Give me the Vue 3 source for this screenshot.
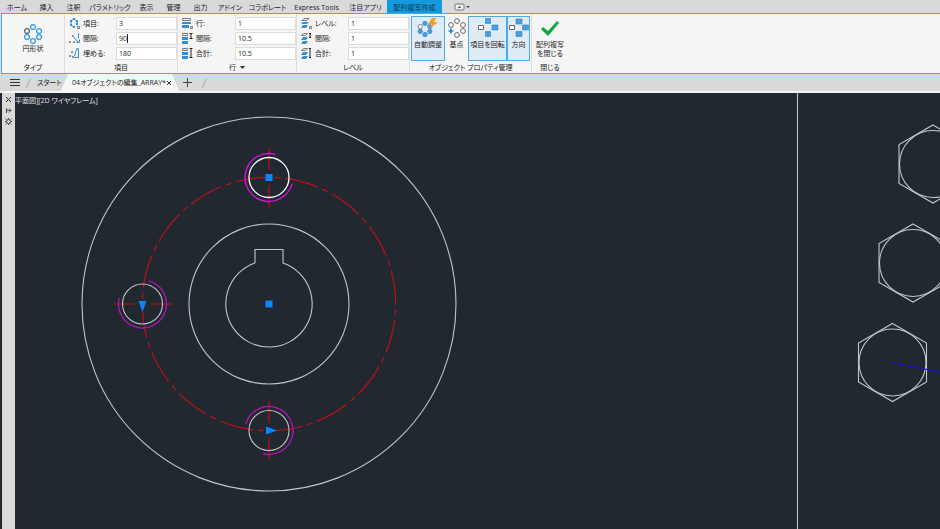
<script setup>
import { ref } from 'vue';

const menuTabs = [
    { name: 'ホーム', size: 'm' },
    { name: '挿入', size: 's' },
    { name: '注釈', size: 's' },
    { name: 'パラメトリック', size: 'xl' },
    { name: '表示', size: 's' },
    { name: '管理', size: 's' },
    { name: '出力', size: 's' },
    { name: 'アドイン', size: 'm' },
    { name: 'コラボレート', size: 'l' },
    { name: 'Express Tools', size: 'xxl' },
    { name: '注目アプリ', size: 'l' },
];

// outline = grey strokes, fill = blue shapes, line = blue strokes, mark = dark strokes
const icons = {
    polar: {
        outline: 'M8.5 8.500h2v2h-2z',
        fill: 'M1 2h2v2h-2zM4 0h2v2h-2zM7 2h2v2h-2zM1 6h2v2h-2zM4 8h2v2h-2zM7 5h2v2h-2z',
        line: 'M2 3l3-2 3 2v3M2 3v4l3 2',
    },
    polarGap: {
        outline: 'M3.500 2.500h1v1h-1zM0.500 8.500h1v1h-1zM4.500 8.500h1v1h-1z',
        line: 'M4.500 4l5 5.500M9.500 0v5M7.500 9.500h3v-3',
    },
    polarFill: {
        outline: 'M0.500 7.500h1v1h-1zM3.500 8.500h1v1h-1zM2.500 3.500h1v1h-1z',
        line: 'M9.500 0.500c-3 1-3 4-4 8M9.500 2v7.500h-4M7 1h3',
    },
    rows: { outline: 'M0.500 0.500h8v2h-8zM8.500 8.500h2v2h-2z', fill: 'M0 4h9v2h-9zM0 7h7v3h-7z' },
    rowGap: { outline: 'M0.500 0.500h5v2h-5z', fill: 'M0 4h6v3h-6zM0 8h6v3h-6z', mark: 'M7.500 0.500h3M7.500 5.500h3M9 1v4' },
    rowTotal: { outline: 'M0.500 0.500h5v2h-5z', fill: 'M0 4h6v3h-6zM0 8h6v3h-6z', mark: 'M7.500 0.500h3M7.500 9.500h3M9 1v9' },
    levels: { outline: 'M3 0.500h5l-2 2h-5zM8.500 8.500h2v2h-2z', fill: 'M2 4h6l-2 2h-6zM2 7h5l-2 3h-5z' },
    levelGap: { outline: 'M2.500 0.500h4l-2 2h-4z', fill: 'M2 4h5l-2 3h-5zM2 8h5l-2 3h-5z', mark: 'M8 0.500h2M8 4.500h2M9 1v3' },
    levelTotal: { outline: 'M2.500 0.500h4l-2 2h-4z', fill: 'M2 4h5l-2 3h-5zM2 8h5l-2 3h-5z', mark: 'M8 0.500h2M8 9.500h2M9 1v9' },
};

const panels = ref([
    {
        id: 'items',
        title: '項目',
        fields: [
            { label: '項目:', value: '3', icon: 'polar' },
            { label: '間隔:', value: '90', icon: 'polarGap', caret: true },
            { label: '埋める:', value: '180', icon: 'polarFill' },
        ],
    },
    {
        id: 'rows',
        title: '行',
        menu: true,
        fields: [
            { label: '行:', value: '1', icon: 'rows' },
            { label: '間隔:', value: '10.5', icon: 'rowGap' },
            { label: '合計:', value: '10.5', icon: 'rowTotal' },
        ],
    },
    {
        id: 'levels',
        title: 'レベル',
        fields: [
            { label: 'レベル:', value: '1', icon: 'levels' },
            { label: '間隔:', value: '1', icon: 'levelGap' },
            { label: '合計:', value: '1', icon: 'levelTotal' },
        ],
    },
]);

const ring = [
    { x: 10, y: 3 },
    { x: 16, y: 7 },
    { x: 16, y: 13 },
    { x: 10, y: 17 },
    { x: 4, y: 13 },
    { x: 4, y: 7 },
];

const holes = [
    { x: 254, y: 84.5, turn: 0, active: true },
    { x: 127.5, y: 211, turn: -90 },
    { x: 254, y: 337.5, turn: -180 },
];

const bolts = [
    { x: 918, y: 71 },
    { x: 898, y: 170 },
    { x: 877.5, y: 269.5 },
];
</script>

<template>
    <div class="app">
        <nav class="menu-bar">
            <button v-for="tab in menuTabs" :key="tab.name" class="menu-tab" :class="tab.size">{{ tab.name }}</button>
            <button class="menu-tab active">配列複写作成</button>
            <button class="menu-view" aria-label="リボン表示">
                <svg width="16" height="8" viewBox="0 0 16 8">
                    <rect x="1" y="1" width="9" height="6" rx="1" fill="#eee" stroke="#777" />
                    <path d="M4 5l1.500-2 1.500 2z" fill="#333" />
                    <path d="M12 3h4l-2 2z" fill="#444" />
                </svg>
            </button>
        </nav>

        <section class="ribbon">
            <div class="panel type">
                <div class="panel-body">
                    <button class="tool">
                        <svg width="20" height="20" viewBox="0 0 20 20" fill="#fff" stroke-width="1.3">
                            <circle v-for="(dot, i) in ring" :key="i" :cx="dot.x" :cy="dot.y" r="2.4" :stroke="i === 5 ? '#666' : '#2f9de4'" />
                        </svg>
                        <span>円形状</span>
                    </button>
                </div>
                <div class="panel-title">タイプ</div>
            </div>

            <div v-for="panel in panels" :key="panel.id" class="panel" :class="panel.id">
                <div class="panel-body fields">
                    <div v-for="(field, i) in panel.fields" :key="i" class="field">
                        <svg width="11" height="11" viewBox="0 0 11 11" fill="none">
                            <path v-if="icons[field.icon].fill" :d="icons[field.icon].fill" fill="#2f8fd8" />
                            <path :d="icons[field.icon].outline" stroke="#777" />
                            <path v-if="icons[field.icon].line" :d="icons[field.icon].line" stroke="#2f8fd8" />
                            <path v-if="icons[field.icon].mark" :d="icons[field.icon].mark" stroke="#222" />
                        </svg>
                        <label :for="panel.id + i">{{ field.label }}</label>
                        <div class="entry">
                            <input :id="panel.id + i" v-model="field.value" type="text" />
                            <i v-if="field.caret" class="caret"></i>
                        </div>
                    </div>
                </div>
                <button v-if="panel.menu" class="panel-title">
                    {{ panel.title }}
                    <svg width="5" height="3" viewBox="0 0 5 3"><path d="M0 0h5l-2.500 3z" fill="#333" /></svg>
                </button>
                <div v-else class="panel-title">{{ panel.title }}</div>
            </div>

            <div class="panel options">
                <div class="panel-body">
                    <button class="tool on auto">
                        <svg width="22" height="20" viewBox="0 0 22 20">
                            <g transform="translate(0 3) scale(.8)">
                                <circle v-for="(dot, i) in ring" :key="i" :cx="dot.x" :cy="dot.y" r="2.7" :fill="i === 5 ? '#fff' : '#4b9fdf'" :stroke="i === 5 ? '#666' : '#3182c4'" />
                            </g>
                            <path d="M15 0l4 0-2 4h4l-9 7 3-5h-4z" fill="#f99c1c" />
                        </svg>
                        <span>自動調整</span>
                    </button>
                    <button class="tool base">
                        <svg width="20" height="20" viewBox="0 0 20 20" fill="#fff" stroke="#666">
                            <template v-for="(dot, i) in ring" :key="i">
                                <circle v-if="i !== 4" :cx="dot.x" :cy="dot.y" r="2.4" />
                            </template>
                            <path d="M4 10.500v5M1.500 13h5" stroke="#1787df" stroke-width="1.6" />
                        </svg>
                        <span>基点</span>
                    </button>
                    <button class="tool on rotate">
                        <svg width="22" height="20" viewBox="0 0 22 20" fill="#4b9fdf" stroke="#3182c4" stroke-width=".6">
                            <path d="M8.500 .5h5v5h-5zM8.500 13.500h5v5h-5zM15 7h6v5h-6z" />
                            <path d="M1.500 7.500h5v4h-5z" fill="#fff" stroke="#666" stroke-width="1" />
                        </svg>
                        <span>項目を回転</span>
                    </button>
                    <button class="tool on direction">
                        <svg width="20" height="20" viewBox="0 0 20 20" fill="#4b9fdf" stroke="#3182c4" stroke-width=".6">
                            <path d="M7 1h6v5h-6zM7 13.500h6v5h-6zM13.500 7h6v5h-6z" />
                            <path d="M0.500 7.500h5v4h-5z" fill="#fff" stroke="#666" stroke-width="1" />
                        </svg>
                        <span>方向</span>
                    </button>
                </div>
                <div class="panel-title">オブジェクト プロパティ管理</div>
            </div>

            <div class="panel close">
                <div class="panel-body">
                    <button class="tool">
                        <svg width="20" height="20" viewBox="0 0 20 20"><path d="M1 11l2-2 5 4 9-10 2 2-11 13z" fill="#10a83c" /></svg>
                        <span>配列複写<br />を閉じる</span>
                    </button>
                </div>
                <div class="panel-title">閉じる</div>
            </div>
        </section>

        <nav class="file-bar">
            <button class="file-menu" aria-label="ファイル メニュー">
                <svg width="10" height="8" viewBox="0 0 10 8"><path d="M0 0.500h10M0 3.500h10M0 6.500h10" stroke="#333" /></svg>
            </button>
            <i class="slash"></i>
            <button class="start">スタート</button>
            <div class="file-tab">
                <button class="file-name">04オブジェクトの編集_ARRAY*</button>
                <button class="file-close" aria-label="閉じる">
                    <svg width="6" height="6" viewBox="0 0 6 6"><path d="M1 1l4 4M5 1l-4 4" stroke="#333" /></svg>
                </button>
            </div>
            <button class="file-add" aria-label="新規図面">
                <svg width="9" height="9" viewBox="0 0 9 9"><path d="M4.500 0v9M0 4.500h9" stroke="#444" /></svg>
            </button>
            <i class="slash"></i>
        </nav>

        <main class="workspace">
            <aside class="palette">
                <button aria-label="パレットを閉じる">
                    <svg width="7" height="7" viewBox="0 0 7 7"><path d="M1 1l5 5M6 1l-5 5" stroke="#333" /></svg>
                </button>
                <button aria-label="自動的に隠す">
                    <svg width="7" height="7" viewBox="0 0 7 7" fill="none" stroke="#555"><path d="M1.500 1v5M2 3.500h4M4 1.500l2 2-2 2" /></svg>
                </button>
                <button aria-label="プロパティ">
                    <svg width="7" height="7" viewBox="0 0 7 7" fill="none" stroke="#444">
                        <circle cx="3.500" cy="3.500" r="2" />
                        <path d="M0.500 0.500l1 1M6.500 0.500l-1 1M0.500 6.500l1-1M6.500 6.500l-1-1M3.500 0v1M3.500 6v1M0 3.500h1M6 3.500h1" />
                    </svg>
                </button>
            </aside>
            <div class="canvas">
                <svg class="drawing" fill="none" stroke="#c3c6c9" stroke-width="1.100">
                    <circle cx="254" cy="211" r="187" />
                    <circle cx="254" cy="211" r="80" />
                    <path d="M240 170V156.500H268V170A43.200 43.200 0 1 1 240 170" />
                    <circle class="pitch" cx="254" cy="211" r="126.700" />

                    <g v-for="hole in holes" :key="hole.turn" :transform="`translate(${hole.x} ${hole.y}) rotate(${hole.turn})`">
                        <path class="center-line" d="M0 -29V-8M0 8V30" />
                        <path class="thread" :class="{ bright: hole.active }" d="M6.200 -23.200A24 24 0 1 0 23.200 6.200" />
                        <circle class="hole" :class="{ bright: hole.active }" r="20" />
                    </g>

                    <g class="grips">
                        <rect x="250.500" y="81" width="7" height="7" />
                        <rect x="250.500" y="207.500" width="7" height="7" />
                        <path d="M123.500 208h8l-4 11z" />
                        <path d="M251 333.500v8l11-4z" />
                    </g>

                    <path d="M782.500 0V2000" />
                    <g v-for="bolt in bolts" :key="bolt.y" :transform="`translate(${bolt.x} ${bolt.y})`">
                        <path d="M0 -39L34 -19.500V19.500L0 39L-34 19.500V-19.500Z" />
                        <circle r="33.500" />
                    </g>
                    <path class="rubber-band" d="M877 269.500L937 281.500" />
                </svg>
                <div class="view-label">平面図][2D ワイヤフレーム]</div>
            </div>
        </main>
    </div>
</template>

<style>
body {
    background: #212830;
}
</style>

<style scoped>
.app {
    display: flex;
    flex-direction: column;
    min-height: 100vh;
    font-family: "Open Sans", "Noto Sans CJK JP", sans-serif;
    font-size: 7px;
    line-height: 9px;
    font-feature-settings: "palt";
    color: #222;
    background: #d9d9d9;
}

button,
input {
    margin: 0;
    padding: 0;
    border: 0;
    background: none;
    font: inherit;
    font-feature-settings: inherit;
    color: inherit;
    white-space: nowrap;
}

svg {
    display: block;
    flex: none;
}

.menu-bar {
    display: flex;
    height: 13px;
    padding-left: 1px;
}

.menu-tab {
    flex: none;
    padding-top: 1px;
}

.menu-tab.s {
    width: 27px;
}

.menu-tab.m {
    width: 32px;
}

.menu-tab.l {
    width: 43px;
}

.menu-tab.xl {
    width: 46px;
}

.menu-tab.xxl,
.menu-tab.active {
    width: 55px;
}

.menu-tab.active {
    background: #1499dc;
    color: #12374f;
}

.menu-view {
    display: flex;
    align-items: center;
    margin-left: 12px;
}

.ribbon {
    display: flex;
    margin-left: 1px;
    border: 1px solid #45abe2;
    border-right: 0;
    background: #f5f5f5;
}

.panel {
    flex: none;
    border-right: 1px solid #dedede;
    display: flex;
    flex-direction: column;
    box-sizing: border-box;
}

.panel.type {
    width: 63px;
}

.panel.items,
.panel.levels {
    width: 113px;
}

.panel.rows {
    width: 119px;
}

.panel.options {
    width: 122px;
}

.panel.close {
    width: 36px;
    border-right: 0;
}

.panel-body {
    display: flex;
    justify-content: center;
    height: 47px;
    box-sizing: border-box;
    padding-top: 2px;
}

.panel-title {
    display: flex;
    justify-content: center;
    align-items: center;
    gap: 4px;
    height: 12px;
    white-space: nowrap;
}

.fields {
    flex-direction: column;
    justify-content: flex-start;
    gap: 2px;
    padding: 3px 0 0 4px;
}

.field {
    display: grid;
    grid-template-columns: 14px 1fr 61px;
    align-items: center;
}

.field label {
    white-space: nowrap;
}

.entry {
    position: relative;
}

.entry input {
    display: block;
    width: 100%;
    height: 13px;
    box-sizing: border-box;
    border: 1px solid #dcdcdc;
    background: #fff;
    padding: 0 2px;
}

.caret {
    position: absolute;
    left: 11px;
    top: 2px;
    width: 1px;
    height: 9px;
    background: #222;
}

.tool {
    display: flex;
    flex-direction: column;
    align-items: center;
    gap: 2px;
    box-sizing: border-box;
    height: 45px;
    padding-top: 1px;
    border: 1px solid transparent;
}

.type .tool {
    padding-top: 7px;
    gap: 0;
}

.tool.on {
    border-color: #4fa9e8;
    background: #dfebf5;
}

.tool.auto {
    width: 34px;
}

.tool.base {
    width: 23px;
}

.tool.rotate {
    width: 39px;
}

.tool.direction {
    width: 23px;
}

.file-bar {
    display: flex;
    align-items: center;
    height: 17px;
    padding-left: 10px;
    border-bottom: 2px solid #f4f4f4;
}

.slash {
    width: 1px;
    height: 10px;
    margin: 0 8px;
    background: #aaa;
    transform: rotate(25deg);
}

.start {
    width: 24px;
}

.file-tab {
    display: flex;
    align-items: center;
    gap: 4px;
    height: 17px;
    padding: 0 7px 0 11px;
    background: #f7f7f7;
    clip-path: polygon(7px 0, calc(100% - 7px) 0, 100% 100%, 0 100%);
}

.file-name {
    width: 90px;
}

.file-add {
    margin: 0 4px;
}

.workspace {
    display: flex;
    flex: 1;
    background: #212830;
}

.palette {
    display: flex;
    flex-direction: column;
    align-items: center;
    gap: 4px;
    width: 13px;
    margin-left: 2px;
    padding-top: 3px;
    box-sizing: border-box;
    background: #dadada;
}

.canvas {
    position: relative;
    display: flex;
    flex: 1;
    min-width: 0;
    overflow: hidden;
}

.drawing {
    flex: 1;
    min-width: 0;
    height: auto;
}

.pitch {
    stroke: #c01016;
    stroke-width: 1.200;
    stroke-dasharray: 34 5 5.750 5;
    stroke-dashoffset: -16;
}

.center-line {
    stroke: #c01016;
    stroke-width: 1.200;
}

.thread {
    stroke: #b812be;
    stroke-width: 1.300;
}

.thread.bright {
    stroke: #e010e5;
}

.hole.bright {
    stroke: #fff;
    stroke-width: 1.300;
}

.grips {
    fill: #0a84ff;
    stroke: none;
}

.rubber-band {
    stroke: #1410d8;
    stroke-width: 1.200;
}

.view-label {
    position: absolute;
    left: 0;
    top: 3px;
    color: #e2e5e8;
    white-space: nowrap;
}
</style>
